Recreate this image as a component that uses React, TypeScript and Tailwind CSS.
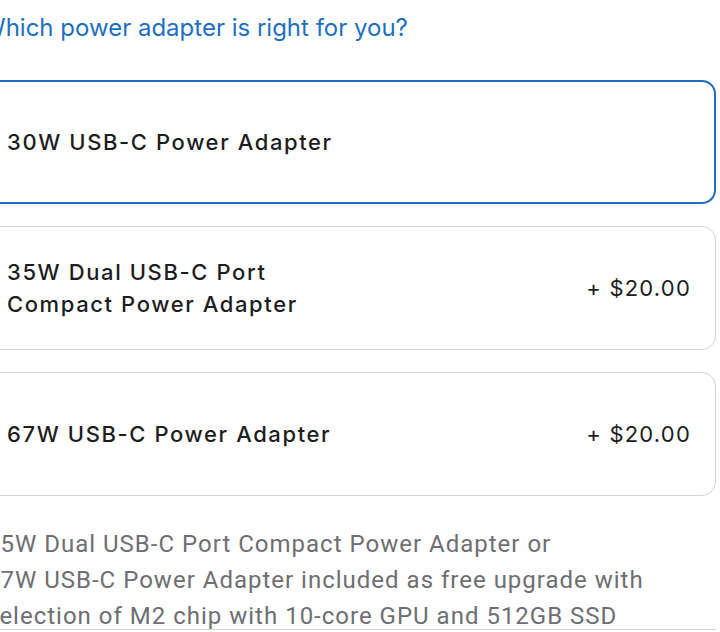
export default function App() {
  const options = [
    { name: ["30W USB-C Power Adapter"], price: "", selected: true },
    { name: ["35W Dual USB-C Port", "Compact Power Adapter"], price: "+ $20.00", selected: false },
    { name: ["67W USB-C Power Adapter"], price: "+ $20.00", selected: false },
  ];
  return (
    <div className="h-[632px] w-[720px] overflow-hidden bg-white">
      <div className="-ml-[18px] w-[734px] pt-[12px]">
        <h2 className="font-['Inter',sans-serif] text-[24px] leading-[32px] text-[#1f6fbf]">
          Which power adapter is right for you?
        </h2>
        <div className="mt-[36px] flex flex-col gap-[22px]">
          {options.map((o) => (
            <div
              key={o.name[0]}
              className={
                o.selected
                  ? "flex h-[124px] items-center justify-between rounded-[14px] border-2 border-[#1f6fbf] pl-[23px] pr-[23px]"
                  : "flex h-[124px] items-center justify-between rounded-[14px] border border-[#d2d2d7] pl-[24px] pr-[24px]"
              }
            >
              <div className="font-['Inter',sans-serif] text-[22px] font-medium leading-[32px] tracking-[1.6px] text-[#1d1d1f]">
                {o.name.map((l) => (
                  <div key={l}>{l}</div>
                ))}
              </div>
              {o.price && (
                <div className="font-['Inter',sans-serif] text-[22px] leading-[32px] tracking-[1.2px] text-[#1d1d1f]">
                  {o.price}
                </div>
              )}
            </div>
          ))}
        </div>
        <div className="mt-[30px] h-[104px] overflow-hidden border-b border-[#d2d2d7] pl-[4px] font-['Roboto',sans-serif] text-[24px] leading-[36px] tracking-[1px] text-[#6e6e73]">
          <p>35W Dual USB-C Port Compact Power Adapter or</p>
          <p>67W USB-C Power Adapter included as free upgrade with</p>
          <p>selection of M2 chip with 10-core GPU and 512GB SSD</p>
        </div>
      </div>
    </div>
  );
}
